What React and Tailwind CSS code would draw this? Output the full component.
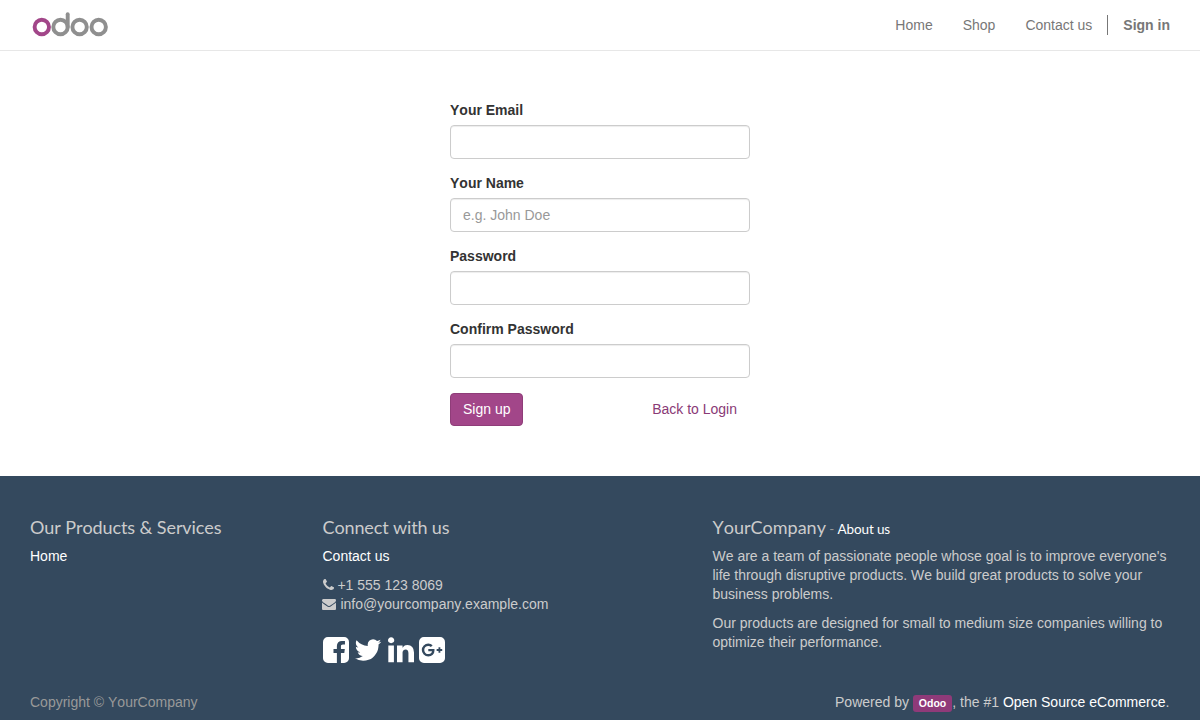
import React from "react";

const icons = {
  phone: {
    box: "192 128 1408 1536",
    d: "M1600 1240q0 27-10 70.5t-21 68.5q-21 50-122 106-94 51-186 51-27 0-52.5-3.5t-57.5-12.5-47.5-14.5-55.5-20.5-49-18q-98-35-175-83-128-79-264.5-215.5t-215.5-264.5q-48-77-83-175-3-9-18-49t-20.5-55.5-14.5-47.5-12.5-57.5-3.5-52.5q0-92 51-186 56-101 106-122 25-11 68.5-21t70.5-10q14 0 21 3 18 6 53 76 11 19 30 54t35 63.5 31 53.5q3 4 17.5 25t21.5 35.5 7 28.5q0 20-28.5 50t-62 55-62 53-28.5 46q0 9 5 22.5t8.5 20.5 14 24 11.5 19q76 137 174 235t235 174q2 1 19 11.5t24 14 20.5 8.5 22.5 5q18 0 46-28.5t53-62 55-62 50-28.5q14 0 28.5 7t35.5 21.5 25 17.5q25 15 53.5 31t63.5 35 54 30q70 35 76 53 3 7 3 21z",
  },
  envelope: {
    box: "0 128 1792 1536",
    d: "M1792 710v794q0 66-47 113t-113 47h-1472q-66 0-113-47t-47-113v-794q44 49 101 87 362 246 497 345 57 42 92.5 65.5t94.5 48 110 24.5h2q51 0 110-24.5t94.5-48 92.5-65.5q170-123 498-345 57-39 100-87zm0-294q0 79-49 151t-122 123q-376 261-468 325-10 7-42.5 31t-54 38.5-52 32.5-57.5 27-50 9h-2q-23 0-50-9t-57.5-27-52-32.5-54-38.5-42.5-31q-91-64-262-182.5t-205-142.5q-62-42-117-115.5t-55-136.5q0-78 41.5-130t118.5-52h1472q65 0 112.5 47t47.5 113z",
  },
  facebook: {
    box: "128 128 1536 1536",
    d: "M1376 128q119 0 203.5 84.5t84.5 203.5v960q0 119-84.5 203.5t-203.5 84.5h-188v-595h199l30-232h-229v-148q0-56 23.5-84t91.5-28l122-1v-207q-63-9-178-9-136 0-217.5 80t-81.5 226v171h-200v232h200v595h-532q-119 0-203.5-84.5t-84.5-203.5v-960q0-119 84.5-203.5t203.5-84.5h960z",
  },
  twitter: {
    box: "64 128 1664 1536",
    d: "M1684 408q-67 98-162 167 1 14 1 42 0 130-38 259.5t-115.5 248.5-184.5 210.5-258 146-323 54.5q-271 0-496-145 35 4 78 4 225 0 401-138-105-2-188-64.5t-114-159.5q33 5 61 5 43 0 85-11-112-23-185.5-111.5t-73.5-205.5v-4q68 38 146 41-66-44-105-115t-39-154q0-88 44-163 121 149 294.5 238.5t371.5 99.5q-8-38-8-74 0-134 94.5-228.5t228.5-94.5q140 0 236 102 109-21 205-78-37 115-142 178 93-10 186-50z",
  },
  linkedin: {
    box: "128 128 1536 1536",
    d: "M477 625v991h-330v-991h330zm21-306q1 73-50.5 122t-135.5 49h-2q-82 0-132-49t-50-122q0-74 51.5-122.5t134.5-48.5 133 48.5 51 122.5zm1166 729v568h-329v-530q0-105-40.5-164.5t-126.5-59.5q-63 0-105.5 34.5t-63.5 85.5q-11 30-11 81v553h-329q2-399 2-647t-1-296l-1-48h329v144h-2q20-32 41-56t56.5-52 87-43.5 114.5-15.5q171 0 275 113.5t104 332.5z",
  },
  googlePlus: {
    box: "128 128 1536 1536",
    d: "M1045 905q0-26-6-64h-362v132h217q-3 24-16.5 50t-37.5 53-66.5 44.5-96.5 17.5q-99 0-169-71t-70-171 70-171 169-71q92 0 153 59l104-101q-108-100-257-100-160 0-272 112.5t-112 271.5 112 271.5 272 112.5q165 0 266.5-105t101.5-270zm345 46h109v-110h-109v-110h-110v110h-110v110h110v110h110v-110zm274-535v960q0 119-84.5 203.5t-203.5 84.5h-960q-119 0-203.5-84.5t-84.5-203.5v-960q0-119 84.5-203.5t203.5-84.5h960q119 0 203.5 84.5t84.5 203.5z",
  },
};

function Icon({ name, className }) {
  return (
    <svg viewBox={icons[name].box} fill="currentColor" aria-hidden="true" className={className}>
      <path d={icons[name].d} />
    </svg>
  );
}

function Logo() {
  return (
    <svg viewBox="0 0 80 30" className="h-[30px] w-20" fill="none" strokeWidth="3.9" role="img" aria-label="odoo">
      <circle cx="11.8" cy="17" r="7.2" stroke="#a24689" />
      <g stroke="#8f8f8f">
        <circle cx="30.5" cy="17" r="7.2" />
        <path d="M37.7 17V4.2" strokeLinecap="round" />
        <circle cx="49.6" cy="17" r="7.2" />
        <circle cx="68.7" cy="17" r="7.2" />
      </g>
    </svg>
  );
}

function Field({ id, label, type = "text", placeholder }) {
  return (
    <div className="mb-[15px]">
      <label htmlFor={id} className="mb-[5px] block font-bold">{label}</label>
      <input
        id={id}
        type={type}
        placeholder={placeholder}
        className="block h-[34px] w-full rounded border border-[#ccc] bg-white px-3 py-1.5 shadow-[inset_0_1px_1px_rgba(0,0,0,0.075)] outline-none placeholder:text-[#999]"
      />
    </div>
  );
}

const heading = "font-[Lato,sans-serif] text-[18px] leading-[20px]";

export default function App() {
  return (
    <div className="flex h-screen flex-col overflow-hidden bg-white font-['Liberation_Sans',Arial,sans-serif] text-[14px] leading-[19px] text-[#333] [font-kerning:none]">
      <header className="flex h-[51px] shrink-0 items-start justify-between border-b border-[#e7e7e7] pr-[15px] pl-[30px]">
        <a href="#" className="pt-[10px]"><Logo /></a>
        <nav className="flex pt-[15px] leading-[20px] text-[#777]">
          <a href="#" className="px-[15px]">Home</a>
          <a href="#" className="px-[15px]">Shop</a>
          <a href="#" className="px-[15px]">Contact us</a>
          <a href="#" className="border-l border-[#777] px-[15px] font-bold">Sign in</a>
        </nav>
      </header>

      <main className="h-[425px] shrink-0 pt-[50px]">
        <form className="mx-auto w-[300px]">
          <Field id="email" label="Your Email" />
          <Field id="name" label="Your Name" placeholder="e.g. John Doe" />
          <Field id="password" label="Password" type="password" />
          <Field id="confirm" label="Confirm Password" type="password" />
          <div className="flex justify-between">
            <button type="button" className="rounded border border-[#8f3d79] bg-[#a24689] px-3 py-1.5 text-white">Sign up</button>
            <a href="#" className="border border-transparent px-3 py-1.5 text-[#8a3a76]">Back to Login</a>
          </div>
        </form>
      </main>

      <footer className="flex flex-1 flex-col bg-[#34495e] text-[#ccc]">
        <div className="grid h-[216px] shrink-0 grid-cols-12 px-[15px] pt-[41px]">
          <section className="col-span-3 px-[15px]">
            <h4 className={`${heading} tracking-[-0.09px]`}>Our Products &amp; Services</h4>
            <a href="#" className="mt-[10px] block text-white">Home</a>
          </section>
          <section className="col-span-4 px-[15px]">
            <h4 className={`${heading} tracking-[-0.13px]`}>Connect with us</h4>
            <a href="#" className="mt-[10px] block text-white">Contact us</a>
            <div className="mt-[10px] flex gap-[3.9px]">
              <Icon name="phone" className="mt-[3px] h-3 w-[11px]" />
              <span>+1 555 123 8069</span>
            </div>
            <div className="flex gap-[3.9px]">
              <Icon name="envelope" className="mt-[3px] -ml-[0.5px] mr-[0.5px] h-3 w-[14px]" />
              <span>info@yourcompany.example.com</span>
            </div>
            <div className="mt-[23px] flex gap-[5.5px] text-white">
              <a href="#" aria-label="Facebook"><Icon name="facebook" className="h-[26px] w-[26px]" /></a>
              <a href="#" aria-label="Twitter"><Icon name="twitter" className="h-[26px] w-[28px]" /></a>
              <a href="#" aria-label="LinkedIn"><Icon name="linkedin" className="h-[26px] w-[26px]" /></a>
              <a href="#" aria-label="Google Plus"><Icon name="googlePlus" className="h-[26px] w-[26px]" /></a>
            </div>
          </section>
          <section className="col-span-5 px-[15px]">
            <h4 className={heading}>
              YourCompany
              <small className="text-[13.5px] leading-none tracking-[-0.12px] text-[#999]"> - <a href="#" className="text-white">About us</a></small>
            </h4>
            <p className="mt-[10px]">
              We are a team of passionate people whose goal is to improve everyone's life through disruptive products. We build great products to solve your business problems.
            </p>
            <p className="mt-[10px]">
              Our products are designed for small to medium size companies willing to optimize their performance.
            </p>
          </section>
        </div>
        <div className="flex justify-between pr-[30.6px] pl-[30px] leading-[20px]">
          <span className="text-[#999]">Copyright © YourCompany</span>
          <span>
            Powered by <a href="#" className="inline-block rounded-[3px] bg-[#8f3a79] px-[6px] pt-[3px] pb-[3px] align-baseline text-[10.5px] leading-[11px] font-bold text-white">Odoo</a>, the #1 <a href="#" className="text-white">Open Source eCommerce</a>.
          </span>
        </div>
      </footer>
    </div>
  );
}
